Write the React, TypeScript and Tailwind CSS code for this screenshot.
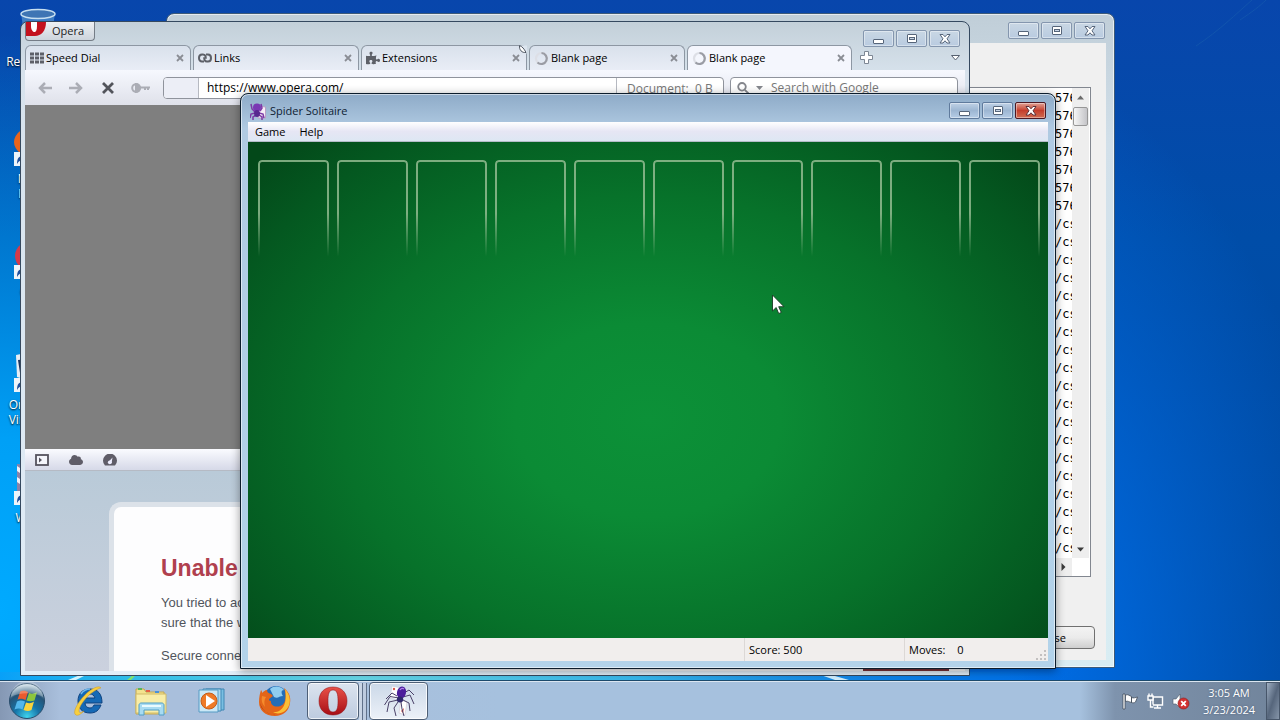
import React from "react";
import { FaPuzzlePiece, FaCloud } from "react-icons/fa";

function WindowButtons({ tone }: { tone: "active" | "idle" }) {
  const plain =
    tone === "active"
      ? "border-[#5f7a9c] bg-linear-to-b from-[#bfd1e6] via-[#9db6d2] to-[#b5cce6]"
      : "border-[#8496ae] bg-linear-to-b from-[#c9d7e4] to-[#b9cbe0]";
  const close =
    tone === "active"
      ? "border-[#4d1822] bg-linear-to-b from-[#e0a095] via-[#c43d2c] to-[#cf6a50]"
      : "border-[#8496ae] bg-linear-to-b from-[#c9d7e4] to-[#b9cbe0]";
  const base =
    "flex h-[17px] w-[31px] items-center justify-center rounded-xs border shadow-[inset_0_0_0_1px_rgba(255,255,255,0.4)]";
  return (
    <div className="flex gap-0.5">
      <button aria-label="Minimize" className={`${base} ${plain}`}>
        <svg width="14" height="12" viewBox="0 0 14 12">
          <rect x="1.5" y="6.5" width="10" height="4" rx="0.5" fill="#fff" stroke="#56657a" />
        </svg>
      </button>
      <button aria-label="Maximize" className={`${base} ${plain}`}>
        <svg width="14" height="12" viewBox="0 0 14 12">
          <rect x="2.5" y="1.5" width="9" height="8" rx="0.5" fill="#fff" stroke="#56657a" />
          <rect x="4.5" y="4.5" width="5" height="2" fill="#c9d6e6" stroke="#56657a" />
        </svg>
      </button>
      <button aria-label="Close window" className={`${base} ${close}`}>
        <svg width="14" height="12" viewBox="0 0 14 12">
          <path
            d="M2 1.500H5L7 3.800 9 1.500h3L9 5.800l3 4.200H9L7 7.800 5 10H2L5 5.800z"
            fill="#fff"
            stroke={tone === "active" ? "#5c3038" : "#56657a"}
          />
        </svg>
      </button>
    </div>
  );
}

function ShortcutArrow() {
  return (
    <g>
      <rect x="0" y="27" width="14" height="14" fill="#eef4fa" />
      <path d="M3 39c0-6 2-8 6-8v-2l4 4-4 4v-2c-3 0-4 1-6 4z" fill="#1f4f9c" />
    </g>
  );
}

function DesktopIcon({ place, label, children }: { place: string; label: string; children: React.ReactNode }) {
  return (
    <div className={`absolute left-0 flex w-[75px] flex-col items-center gap-1 ${place}`}>
      <svg width="48" height="42" viewBox="0 0 48 42">
        {children}
      </svg>
      <span className="text-center text-[12px] leading-[15px] whitespace-pre-line text-white [text-shadow:0_1px_2px_#000]">
        {label}
      </span>
    </div>
  );
}

const SpeedDialIcon = () => (
  <svg width="14" height="12" viewBox="0 0 14 12" fill="#5d6068">
    {[0, 4, 8].map((y) => [0, 5, 10].map((x) => <rect key={`${x}-${y}`} x={x} y={y + 0.5} width="4" height="3" />))}
  </svg>
);

const LinksIcon = () => (
  <svg width="14" height="12" viewBox="0 0 14 12" fill="none" stroke="#5d6068" strokeWidth="2">
    <path d="M6 9.500H4C2.200 9.500 1 8 1 6s1.200-3.500 3-3.500h1C7 2.500 8 4 7.800 6.800" />
    <path d="M8 2.500h2c1.800 0 3 1.500 3 3.500s-1.200 3.500-3 3.500H9C7 9.500 6 8 6.200 5.200" />
  </svg>
);

const SpinnerIcon = () => (
  <svg width="15" height="15" viewBox="0 0 15 15" fill="none" strokeWidth="2.200">
    <circle cx="7.500" cy="7.500" r="5.500" stroke="#dddfe6" />
    <path d="M7.500 2a5.500 5.500 0 1 1-4 9.500" stroke="#9a9ca4" />
  </svg>
);

const tabs = [
  { title: "Speed Dial", icon: <SpeedDialIcon />, width: "w-[166px]" },
  { title: "Links", icon: <LinksIcon />, width: "w-[166px]" },
  { title: "Extensions", icon: <FaPuzzlePiece size={14} color="#5d6068" />, width: "w-[166px]" },
  { title: "Blank page", icon: <SpinnerIcon />, width: "w-[156px]" },
  { title: "Blank page", icon: <SpinnerIcon />, width: "w-[165px]" },
];

const listRows = [...Array(7).fill("576"), ...Array(19).fill("/css")];

function ReportWindow() {
  return (
    <section
      aria-label="Report"
      className="absolute top-[13px] left-[166px] flex h-[655px] w-[949px] flex-col rounded-t-lg border border-[#3d5a78] bg-linear-to-b from-[#c0ced8] via-[#d2e0ea] via-20% to-[#d9edf3] px-2 pb-[7px] shadow-[inset_0_0_0_1px_rgba(255,255,255,0.6)]"
    >
      <div className="flex h-[29px] shrink-0 justify-end pt-2 pr-px">
        <WindowButtons tone="idle" />
      </div>
      <div className="flex flex-1 flex-col items-end gap-[49px] bg-[#f0f0f0] pt-[44px] pr-[11px]">
        <div className="mr-1 flex h-[490px] w-[850px] justify-end border border-[#828790] bg-white">
          <div className="flex w-[35px] flex-col">
            <div className="flex min-h-0 flex-1">
              <ul className="w-[17px] overflow-hidden pt-px font-['DejaVu_Sans_Mono',monospace] text-[12px] leading-[18px] text-black">
                {listRows.map((row, i) => (
                  <li key={i}>{row}</li>
                ))}
              </ul>
              <div className="flex w-[17px] flex-col items-center bg-[#eeeeee]">
                <svg className="my-[7px] shrink-0" width="7" height="5" viewBox="0 0 7 5">
                  <path d="M0 4.500L3.500 0.500 7 4.500z" fill="#6b6b6b" />
                </svg>
                <div className="h-[19px] w-[15px] shrink-0 rounded-xs border border-[#979797] bg-linear-to-r from-[#f6f6f6] to-[#c4c4c8]" />
                <svg className="mt-auto mb-1.5 shrink-0" width="7" height="5" viewBox="0 0 7 5">
                  <path d="M0 0.500L3.500 4.500 7 0.500z" fill="#3b3b3b" />
                </svg>
              </div>
            </div>
            <div className="flex h-[18px] w-[17px] items-center justify-center bg-[#eeeeee]">
              <svg width="5" height="8" viewBox="0 0 5 8">
                <path d="M0.500 0L4.500 4 0.500 8z" fill="#3b3b3b" />
              </svg>
            </div>
          </div>
        </div>
        <button className="h-[23px] w-[86px] rounded-sm border border-[#707070] bg-linear-to-b from-[#f3f3f3] via-[#ebebeb] to-[#cfcfcf] text-[11px] leading-5 text-black">
          Close
        </button>
      </div>
    </section>
  );
}

function OperaWindow() {
  return (
    <section
      aria-label="Opera"
      className="absolute top-[21px] left-[20px] flex h-[655px] w-[950px] flex-col rounded-t-lg border border-[#35495f] bg-linear-to-b from-[#c3d0d9] via-[#d7e2ec] via-8% to-[#e2eef8] px-1 pb-1"
    >
      <header className="flex h-[23px] shrink-0 items-start justify-between pr-[5px]">
        <button className="flex h-[19px] w-[70px] items-start gap-1.5 overflow-hidden rounded-b-sm border border-t-0 border-[#757d87] bg-linear-to-b from-[#eef1f4] to-[#cdd4dc] text-[11px] leading-[18px] text-[#222]">
          <svg width="20" height="14" viewBox="0 0 20 14">
            <path d="M0 0H20C20 9 15 14 9 14H0z" fill="#c3121e" />
            <path d="M5 0H11V4C11 8 10 10 8.500 10S5 8 5 4z" fill="#fff" />
          </svg>
          Opera
        </button>
        <div className="pt-2">
          <WindowButtons tone="idle" />
        </div>
      </header>
      <nav className="flex h-[25px] shrink-0 items-end gap-0.5 text-[11px] text-black">
        {tabs.map((tab, i) => (
          <div
            key={i}
            className={`relative flex h-[25px] items-center rounded-t-md border border-b-0 border-[#8d97a3] pr-1.5 pl-1 ${tab.width} ${
              i === 4 ? "bg-[#f4f6fd]" : "bg-linear-to-b from-[#d9e1ec] to-[#e9edf6]"
            }`}
          >
            <button className="flex min-w-0 flex-1 items-center gap-0.5 leading-4">
              {tab.icon}
              {tab.title}
            </button>
            <button aria-label={`Close ${tab.title}`}>
              <svg width="8" height="8" viewBox="0 0 8 8" stroke="#8a8d94" strokeWidth="1.800">
                <path d="M1 1l6 6M7 1L1 7" />
              </svg>
            </button>
            {i === 2 && (
              <svg className="absolute -top-px -right-px" width="9" height="9" viewBox="0 0 9 9">
                <path d="M1 0.500H9V8.500C5 8 2 5 1 0.500z" fill="#dce5ef" />
                <path d="M1.500 0.500C1 5 4 8 8 7.500 6 3.500 4 1.500 1.500 0.500z" fill="#fff" stroke="#4d5560" />
              </svg>
            )}
          </div>
        ))}
        <button aria-label="New tab" className="ml-1.5 self-center">
          <svg width="13" height="13" viewBox="0 0 13 13">
            <path d="M4.500 0.500h4v4h4v4h-4v4h-4v-4h-4v-4h4z" fill="#fff" stroke="#7d8794" />
          </svg>
        </button>
        <button aria-label="Closed tabs" className="mr-[5px] ml-auto self-center">
          <svg width="9" height="6" viewBox="0 0 9 6">
            <path d="M0.500 0.500h8L4.500 5z" fill="#fff" stroke="#566170" />
          </svg>
        </button>
      </nav>
      <div className="flex h-[35px] shrink-0 items-center bg-linear-to-b from-[#f6f8fe] to-[#dfe1ea] text-[12px]">
        <div className="flex w-[138px] items-center gap-[17px] pl-[13px]">
          <button aria-label="Back">
            <svg width="14" height="12" viewBox="0 0 14 12" fill="none" stroke="#abadb5" strokeWidth="2.500">
              <path d="M14 6H2.500M7 1L2 6l5 5" />
            </svg>
          </button>
          <button aria-label="Forward">
            <svg width="14" height="12" viewBox="0 0 14 12" fill="none" stroke="#abadb5" strokeWidth="2.500">
              <path d="M0 6h11.500M7 1l5 5-5 5" />
            </svg>
          </button>
          <button aria-label="Stop" className="ml-0.5">
            <svg width="12" height="12" viewBox="0 0 12 12" fill="none" stroke="#52545b" strokeWidth="2.800">
              <path d="M1 1l10 10M11 1L1 11" />
            </svg>
          </button>
          <button aria-label="Password">
            <svg width="19" height="10" viewBox="0 0 19 10" fill="none" stroke="#abadb5" strokeWidth="2">
              <circle cx="5" cy="5" r="3.800" />
              <path d="M5 1a4 4 0 0 1 0 8z" fill="#abadb5" />
              <path d="M9 4.500h10M14 5v2M17 5v2" />
            </svg>
          </button>
        </div>
        <div className="flex h-[22px] w-[561px] overflow-hidden rounded-sm border border-[#8f939c] bg-white">
          <span className="w-[35px] border-r border-[#b6b9c1] bg-[#eceef6]" />
          <input aria-label="Address" defaultValue="https://www.opera.com/" className="min-w-0 flex-1 px-2 text-black outline-none" />
          <span className="w-[107px] border-l border-[#b6b9c1] pl-2.5 leading-[21px] whitespace-pre text-[#777]">Document:  0 B</span>
        </div>
        <div className="ml-1.5 flex h-[22px] w-[228px] items-center rounded-sm border border-[#8f939c] bg-white pl-1.5">
          <svg width="28" height="12" viewBox="0 0 28 12" fill="none" stroke="#85878d" strokeWidth="1.800">
            <circle cx="5" cy="4.800" r="3.800" />
            <path d="M7.800 7.800L11.500 11.500" />
            <path d="M19 4h7l-3.500 4z" fill="#85878d" stroke="none" />
          </svg>
          <input
            aria-label="Search"
            placeholder="Search with Google"
            className="min-w-0 flex-1 px-1.5 text-[#777] outline-none placeholder:text-[#777]"
          />
        </div>
      </div>
      <div className="h-[344px] shrink-0 bg-[#7f7f7f]" />
      <div className="flex h-[22px] shrink-0 items-center gap-5 border-b border-[#b5bac4] bg-linear-to-b from-[#fafbff] to-[#d6d9e8] px-2.5">
        <button aria-label="Panels">
          <svg width="14" height="12" viewBox="0 0 14 12">
            <rect x="1" y="1" width="12" height="10" fill="#f4f5fb" stroke="#55535e" strokeWidth="1.800" />
            <path d="M4 3.500L7 6 4 8.500z" fill="#55535e" />
          </svg>
        </button>
        <FaCloud size={14} color="#5f5d68" />
        <svg width="14" height="12" viewBox="0 0 14 12">
          <path d="M2 11.500A7 7 0 1 1 12 11.500z" fill="#5f5d68" />
          <path d="M5.500 8L9.500 3.500 8.500 9.500z" fill="#eef" />
          <circle cx="6.800" cy="8.300" r="1.900" fill="#eef" />
        </svg>
      </div>
      <main className="flex min-h-0 flex-1 bg-linear-to-b from-[#b9cad8] to-[#cbd1de] pt-[31px] pl-[84px] font-['Liberation_Sans',Arial,sans-serif]">
        <article className="flex flex-1 flex-col rounded-tl-xl border-t-[5px] border-l-[5px] border-[#dce2e9] bg-[#fdfdfe] pt-[47px] pl-[47px] text-[13px] leading-5 text-[#50545c]">
          <h1 className="mb-[11px] text-[23px] leading-7 font-bold text-[#b0404e]">Unable to complete secure transaction</h1>
          <p>
            You tried to access an address which is currently unavailable. Please make
            <br />
            sure that the web address is correctly spelled and punctuated.
          </p>
          <p className="mt-[13px]">Secure connection: fatal error</p>
          <div className="mt-auto mr-4 h-[3px] w-[86px] self-end bg-[#7c3138]" />
        </article>
      </main>
    </section>
  );
}

function SpiderGlyph() {
  return (
    <svg width="32" height="32" viewBox="0 0 32 32" fill="none">
      <path d="M9 1l9 2-2 12-9-2z" fill="#fff" stroke="#c9cbdc" strokeWidth="0.700" />
      <path d="M18 15l6 2-2 13-6-2z" fill="#fff" stroke="#d5cbd6" strokeWidth="0.700" />
      <circle cx="11" cy="4" r="1.200" fill="#d8574c" />
      <path d="M18 26l3-3-1 5z" fill="#d8574c" />
      <g stroke="#4a4168" strokeWidth="1">
        <path d="M16 13L7 11.500 1.500 20M15 15L6 17 4 27M15 17l-4 6 2 8M18 17l1 7 2 7M20 15l6 3 1 8M20 12l7-2 4 9M21 8l5-3 5 5M14 11L9 8 3 14" />
      </g>
      <ellipse cx="18.500" cy="7.500" rx="4.500" ry="6" fill="#4b1d9b" transform="rotate(15 18.500 7.500)" />
      <ellipse cx="17" cy="14.500" rx="3.200" ry="3" fill="#302a6d" />
      <path d="M17 5c1-2 3-2 4-1" stroke="#b184ea" strokeWidth="1.300" />
    </svg>
  );
}

function SolitaireWindow() {
  return (
    <section
      aria-label="Spider Solitaire"
      className="absolute top-[93px] left-[240px] flex h-[576px] w-[816px] flex-col rounded-t-lg border border-[#0c1d2c] bg-linear-to-b from-[#8eabc8] via-[#b0cae2] via-6% to-[#b3d3ea] px-[7px] pb-[7px] shadow-[0_2px_10px_rgba(0,0,0,0.4),inset_0_0_0_1px_rgba(255,255,255,0.55)]"
    >
      <header className="flex h-7 shrink-0 items-start justify-between pr-0.5">
        <h2 className="flex items-center gap-1 pt-2 pl-0.5 text-[11px] leading-[18px] text-[#0d1c33]">
          <svg width="16" height="17" viewBox="0 0 16 17" fill="none">
            <path d="M7 3l8.500 1v11H8z" fill="#f6edf7" stroke="#b9a0c6" />
            <g stroke="#7c3aa6" strokeWidth="1.500">
              <path d="M5 9L2 6 1 1M5 10l-4 1-1 4M6 12l-3 2v3M9 12l3 2v3M9 10l4 1 1 4M10 8l2-3-1-4" />
            </g>
            <circle cx="7" cy="4.500" r="4" fill="#7a37b4" />
            <ellipse cx="7" cy="10.500" rx="3" ry="3.500" fill="#57288f" />
          </svg>
          Spider Solitaire
        </h2>
        <div className="pt-2">
          <WindowButtons tone="active" />
        </div>
      </header>
      <nav className="flex h-5 shrink-0 gap-3.5 border-b border-[#b4bcc8] bg-linear-to-b from-white via-[#e6e6f4] to-[#dde7f3] pl-[7px] text-[11px] leading-5 text-black">
        <button>Game</button>
        <button>Help</button>
      </nav>
      <main className="flex-1 bg-[radial-gradient(ellipse_66%_78%_at_50%_56%,#0c9138_0%,#0b8b35_25%,#07722a_58%,#045820_85%,#034819_100%)] pt-[18px] pr-2 pl-2.5">
        <div className="grid grid-cols-10 gap-2">
          {Array.from({ length: 10 }, (_, i) => (
            <div
              key={i}
              className="h-[97px] rounded-t border-2 border-b-0 border-[#9cc198]/80 [mask-image:linear-gradient(#000_55%,transparent)]"
            />
          ))}
        </div>
      </main>
      <footer className="flex h-[23px] shrink-0 bg-[#f1eeed] text-[11px] leading-6 text-black">
        <span className="flex-1" />
        <span className="w-[160px] border-l border-[#dcd8d6] pl-1">Score: 500</span>
        <span className="flex w-[120px] gap-3 border-l border-[#dcd8d6] pl-1">
          <span>Moves:</span>
          <span>0</span>
        </span>
        <svg className="self-end" width="24" height="12" viewBox="0 0 24 12" fill="#c3c0c0">
          <path d="M20 1h2v2h-2zM20 5h2v2h-2zM20 9h2v2h-2zM16 5h2v2h-2zM16 9h2v2h-2zM12 9h2v2h-2z" />
        </svg>
      </footer>
    </section>
  );
}

function Taskbar() {
  return (
    <footer className="flex h-[39px] shrink-0 items-center border-t border-[#dbe6f1] bg-[linear-gradient(90deg,#8598b4_0,#a9bfdc_60px,#a9bfdc_300px,#a6c1de_500px,#a6c1de_calc(100%_-_200px),#7e93ad_calc(100%_-_165px),#71849b_100%)]">
      <button aria-label="Start" className="ml-2">
        <svg width="38" height="38" viewBox="0 0 38 38">
          <defs>
            <radialGradient id="orb" cx="0.5" cy="0.95" r="0.9">
              <stop offset="0" stopColor="#3fd4ee" />
              <stop offset="0.4" stopColor="#1674a8" />
              <stop offset="0.75" stopColor="#265477" />
              <stop offset="1" stopColor="#c2d5e0" />
            </radialGradient>
          </defs>
          <circle cx="19" cy="19" r="17.500" fill="url(#orb)" stroke="#294d6c" />
          <path d="M12 10c3-2 5-1 8 0l-2.500 8c-3-1-5-2-8 0z" fill="#ea5b2d" />
          <path d="M21 11c3 1 5 1 8-1l-2.500 8.500c-3 1-5 1-8 0z" fill="#8cc63d" />
          <path d="M9 19.500c3-1.500 5-1 8 0l-2.500 8c-2-1-4.500-1.500-8 0z" fill="#53b7ec" />
          <path d="M18 20.500c3 1 5 1 8-1L23.500 28c-3 1.500-5 1-8 0z" fill="#fbd43c" />
          <path d="M3 15a16 16 0 0 1 32 0c-8-5-24-5-32 0z" fill="#fff" opacity="0.250" />
        </svg>
      </button>
      <button aria-label="Internet Explorer" className="ml-[26px]">
        <svg width="32" height="32" viewBox="0 0 32 32">
          <path
            d="M18 4C10 4 6 9 6 16s4 12 12 12c6 0 9-3 11-8h-7c-1 2-2 3-4 3-3 0-5-2-5-5h17C30 9 26 4 18 4zm-5 9c1-3 3-4 5-4s4 1 5 4z"
            fill="#1569b5"
            stroke="#0e427f"
          />
          <path d="M9 9c2-3 6-5 9-5" stroke="#71b9ec" strokeWidth="1.500" fill="none" />
          <path d="M29 3c-2-3-9 0-16 7C5 18 0 28 4 30c2 1 5-1 8-4-3 2-5 2-5 0 0-4 4-10 10-16 5-4 10-7 12-7z" fill="#f7cf40" stroke="#cc9623" strokeWidth="0.500" />
        </svg>
      </button>
      <button aria-label="Windows Explorer" className="ml-[30px]">
        <svg width="34" height="32" viewBox="0 0 34 32">
          <path d="M2 4h8l2 3h18v22H2z" fill="#f3e28e" stroke="#c2a650" />
          <path d="M4 3h4v2H4z" fill="#57b65a" />
          <path d="M12 5h4v2h-4z" fill="#e65f45" />
          <path d="M21 6h4v2h-4z" fill="#4a91da" />
          <path d="M2 9h30v19H2z" fill="#f8eda8" stroke="#d1ba66" />
          <path d="M5 30V20c0-1 1-2 2-2h21c1 0 2 1 2 2v10h-5v-5H10v5z" fill="#a8dbf1" stroke="#519ec6" />
          <path d="M8 21h19" stroke="#e8faff" strokeWidth="2" />
        </svg>
      </button>
      <button aria-label="Media Player" className="ml-[28px]">
        <svg width="32" height="32" viewBox="0 0 32 32">
          <path d="M10 4h18v21H10z" fill="#79bfe2" stroke="#4187b4" />
          <path d="M7 4h18v22H7z" fill="#a8d8ef" stroke="#4187b4" />
          <path d="M3 5h19v22H3z" fill="#cbe8f6" stroke="#549bc4" />
          <circle cx="13" cy="16" r="8" fill="#ee7a27" stroke="#c65d18" />
          <path d="M10 10L19 16l-9 6z" fill="#fff" />
        </svg>
      </button>
      <button aria-label="Firefox" className="ml-[30px]">
        <svg width="34" height="34" viewBox="0 0 34 34">
          <circle cx="18" cy="14" r="12" fill="#246db6" />
          <path d="M12 5c4-4 11-3 14 1-3 0-3 3-1 6-4 0-5 3-9 1z" fill="#8fcdf0" />
          <path
            d="M3 6c1 1 1 2 1 3 1-1 3-3 5-3 0 2 1 3 4 4l2 2-4 3c0 1 0 2 2 2-1 6 9 8 13 2 2-4 2-10 0-15 5 4 7 9 6 15-1 8-7 13-15 13C7 32 1 26 1 18c0-5 1-9 2-12z"
            fill="#e36519"
          />
          <path d="M27 5c6 6 7 16 0 22-4 3-9 3-12 1 9 1 15-8 12-23z" fill="#fbbf35" />
          <path d="M2 19c1 7 8 12 15 11-6 1-12-2-15-11z" fill="#9c2d16" />
          <path d="M4 12c-1 4 0 8 3 11-1-4-1-7 1-10z" fill="#f58b2c" />
        </svg>
      </button>
      <button
        aria-label="Opera"
        className="ml-[15px] flex h-[38px] w-[52px] items-center justify-center rounded-sm border border-[#4e5f76] bg-linear-to-b from-[#dce4ef] to-[#bdcbdf] shadow-[inset_0_0_0_1px_rgba(255,255,255,0.7)]"
      >
        <svg width="30" height="30" viewBox="0 0 30 30">
          <defs>
            <linearGradient id="opera" x2="0" y2="1">
              <stop offset="0" stopColor="#e85148" />
              <stop offset="1" stopColor="#a70e15" />
            </linearGradient>
          </defs>
          <path
            fillRule="evenodd"
            d="M15 1C6 1 1 7 1 15s5 14 14 14 14-6 14-14S24 1 15 1zm0 3c4 0 5 4 5 11s-1 11-5 11-5-4-5-11 1-11 5-11z"
            fill="url(#opera)"
            stroke="#8d1016"
            strokeWidth="0.500"
          />
        </svg>
      </button>
      <span className="h-[37px] w-1 border-r border-[#60718a] bg-[#c9d5e5]" />
      <span className="h-[37px] w-1 border-r border-[#60718a] bg-[#bdcbdf]" />
      <button
        aria-label="Spider Solitaire"
        className="ml-0.5 flex h-[38px] w-[59px] items-center justify-center rounded-sm border border-[#4e5f76] bg-linear-to-b from-[#cbd8e8] to-[#ecf1f8] shadow-[inset_0_0_0_1px_rgba(255,255,255,0.8)]"
      >
        <SpiderGlyph />
      </button>
      <div className="ml-auto flex items-center gap-2">
        <svg width="17" height="17" viewBox="0 0 17 17" fill="#fff" stroke="#35404f" strokeWidth="0.700">
          <path d="M1 1h2v15H1z" />
          <path d="M3.500 2c3-1 4 1 6 1.500v6C7 9 6 7.500 3.500 8.500zM9.500 4.500c2 1 4 0 6-.5l-2 5c-1 1-3 1-4 .5z" />
        </svg>
        <svg width="17" height="17" viewBox="0 0 17 17" fill="none" stroke="#fff" strokeWidth="1.400">
          <path d="M6 4h9.500v8H6z" fill="#6e8096" />
          <path d="M7 15h7M10.500 12v3" />
          <path d="M1 3h5v4H1zM2 0.500V3M5 0.500V3M3.500 7v7h3" fill="#6e8096" />
        </svg>
        <svg width="18" height="17" viewBox="0 0 18 17">
          <path d="M1 6h3l4-5v14l-4-4H1z" fill="#fff" stroke="#4d5a6b" strokeWidth="0.600" />
          <circle cx="11.500" cy="10.500" r="5.500" fill="#d23232" stroke="#8f1a1a" strokeWidth="0.600" />
          <path d="M9.200 8.200l4.600 4.600M13.800 8.200l-4.600 4.600" stroke="#fff" strokeWidth="1.800" />
        </svg>
      </div>
      <time className="ml-1.5 w-[66px] text-center text-[11px] leading-[17px] text-white [text-shadow:0_0_2px_rgba(40,60,90,0.6)]">
        3:05 AM
        <br />
        3/23/2024
      </time>
      <button
        aria-label="Show desktop"
        className="ml-1 h-[38px] w-3.5 border border-[#47566a] bg-linear-to-br from-[#9fafc2] via-[#56667c] to-[#8595a9]"
      />
    </footer>
  );
}

export default function App() {
  return (
    <div className="flex h-screen flex-col overflow-hidden bg-[#0058b8] font-['Open_Sans','Noto_Sans',sans-serif]">
      <div className="relative min-h-0 flex-1 overflow-hidden border-b border-[#1c4a6c] bg-[radial-gradient(ellipse_30%_85%_at_0%_90%,#00aaff_0%,#00a0f6_30%,transparent_100%),radial-gradient(ellipse_34%_95%_at_72%_100%,#0070ec_20%,transparent_100%),linear-gradient(180deg,#0846ac_0%,#004da8_35%,#00479c_100%)]">
        <svg className="absolute bottom-0 left-0 h-2 w-full" viewBox="0 0 1280 8" preserveAspectRatio="none">
          <defs>
            <linearGradient id="glow">
              <stop offset="0" stopColor="#08a0f8" />
              <stop offset="0.1" stopColor="#30bde8" />
              <stop offset="0.28" stopColor="#65d4e4" />
              <stop offset="0.5" stopColor="#35b5ea" />
              <stop offset="0.78" stopColor="#0577e2" stopOpacity="0.5" />
              <stop offset="0.85" stopColor="#0068dc" stopOpacity="0" />
            </linearGradient>
          </defs>
          <rect width="1280" height="8" fill="url(#glow)" />
          <path d="M68 8l12-5h6l-10 5zM815 1l20 7h14L828 2z" fill="#f2ffff" opacity="0.850" />
          <path d="M127 8l6-5h3l-5 5z" fill="#7fe06c" />
        </svg>
        <svg className="absolute top-0 right-0" width="90" height="60" viewBox="0 0 90 60" fill="none" stroke="#2e7bb0" opacity="0.250">
          <path d="M6 46C30 30 46 14 62 0M50 20C62 12 70 6 76 0" />
        </svg>
        <DesktopIcon place="top-2" label="Recycle Bin">
          <path d="M7 4h34l-4 32H11z" fill="#4e8ccb" opacity="0.800" />
          <ellipse cx="24" cy="6" rx="17" ry="4.500" fill="#3e75b4" stroke="#c7dff0" strokeWidth="1.500" />
        </DesktopIcon>
        <DesktopIcon place="top-[125px]" label={"Mozilla\nFirefox"}>
          <ellipse cx="22" cy="17" rx="22" ry="16" fill="#e8641c" />
          <ShortcutArrow />
        </DesktopIcon>
        <DesktopIcon place="top-[238px]" label="Opera">
          <ellipse cx="22" cy="18" rx="21" ry="17" fill="#d43a4a" />
          <ShortcutArrow />
        </DesktopIcon>
        <DesktopIcon place="top-[351px]" label={"Oracle VM\nVirtualBox"}>
          <path d="M2 4L22 0v32L3 26z" fill="#e7edf4" />
          <path d="M4 9L22 7v20L6 22z" fill="#1c355e" />
          <ShortcutArrow />
        </DesktopIcon>
        <DesktopIcon place="top-[464px]" label="WinRAR">
          <path d="M3 0L44 2v36H3z" fill="#8a82a8" />
          <path d="M3 2l6 4v5L3 7zM3 13l6 4v5l-6-4z" fill="#f1f1f8" />
          <ShortcutArrow />
        </DesktopIcon>
        <ReportWindow />
        <OperaWindow />
        <SolitaireWindow />
        <svg className="absolute top-[294px] left-[771px]" width="14" height="22" viewBox="0 0 14 22">
          <path d="M1.500 1v16l3.700-3.500L7.700 19.500l2.600-1L7.700 12.700H13z" fill="#fff" stroke="#1b3a24" strokeWidth="0.900" />
        </svg>
      </div>
      <Taskbar />
    </div>
  );
}
